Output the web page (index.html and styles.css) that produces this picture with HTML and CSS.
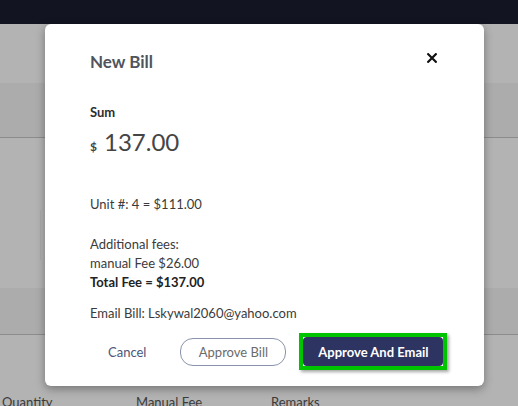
FILE: index.html
```html
<!DOCTYPE html>
<html>
<head>
<meta charset="utf-8">
<link rel="stylesheet" href="styles.css">
</head>
<body>
<div class="page">
  <div class="topbar"></div>
  <div class="band-light b1"></div>
  <div class="band-dark b2"></div>
  <div class="band-light b3"><span class="vline"></span></div>
  <div class="band-dark b4"></div>
  <div class="band-light b5">
    <div class="cols">
      <span>Quantity</span>
      <span>Manual Fee</span>
      <span>Remarks</span>
    </div>
  </div>
</div>

<div class="modal">
  <div class="modal-head">
    <h2 class="title">New Bill</h2>
    <button class="close" aria-label="Close">
      <svg width="10" height="10" viewBox="0 0 10 10"><path d="M1.2 1.2 L8.8 8.8 M8.8 1.2 L1.2 8.8" stroke="#111" stroke-width="2.2" stroke-linecap="square"/></svg>
    </button>
  </div>
  <div class="label">Sum</div>
  <div class="amount"><span class="cur">$</span><span class="num">137.00</span></div>
  <div class="unit">Unit #: 4 = $111.00</div>
  <div class="fees">
    <div>Additional fees:</div>
    <div>manual Fee $26.00</div>
    <div class="total">Total Fee = $137.00</div>
  </div>
  <div class="email">Email Bill: Lskywal2060@yahoo.com</div>
  <div class="actions">
    <button class="btn-cancel">Cancel</button>
    <button class="btn-outline">Approve Bill</button>
    <div class="highlight"><button class="btn-primary">Approve And Email</button></div>
  </div>
</div>
</body>
</html>
```

FILE: styles.css
```css
* { box-sizing: border-box; }
html, body { margin: 0; padding: 0; }
body {
  width: 518px;
  height: 406px;
  overflow: hidden;
  background: #b3b3b3;
  font-family: Lato, "Noto Sans", sans-serif;
  position: relative;
}
.page { display: flex; flex-direction: column; }
.topbar { height: 24px; background: #121521; }
.band-light { background: #b3b3b3; }
.band-dark { background: #acacac; border-bottom: 1px solid #8c8c8c; }
.b1 { height: 59px; }
.b2 { height: 55px; }
.b3 { height: 150px; position: relative; }
.vline { position: absolute; left: 40px; top: 72px; width: 1px; height: 50px; background: #aaaaaa; }
.b4 { height: 47px; }
.b5 { height: 80px; }
.cols {
  display: grid;
  grid-template-columns: 134px 135px 135px;
  padding: 59px 0 0 2px;
  font-size: 13px;
  color: #3a3a3a;
}

.modal {
  position: absolute;
  left: 45px;
  top: 24px;
  width: 439px;
  height: 362px;
  background: #fff;
  border-radius: 6px;
  box-shadow: 0 3px 10px rgba(0,0,0,0.35);
  padding: 28px 45px 0 45px;
  color: #3b3b3b;
  font-size: 13px;
}
.modal-head { display: flex; justify-content: space-between; align-items: center; height: 20px; }
.title {
  margin: 0;
  font-size: 17px;
  line-height: 20px;
  font-weight: 700;
  color: #50545d;
}
.close {
  border: 0; background: none; padding: 0; margin: 0 2px 0 0;
  width: 10px; height: 10px; display: flex;
  position: relative; top: -4px;
}
.label { margin-top: 32px; font-weight: 700; line-height: 16px; color: #2d2d2d; }
.amount { margin-top: 8px; display: flex; align-items: baseline; line-height: 28px; }
.cur { font-size: 12px; font-weight: 700; color: #444; margin-right: 7px; }
.num { font-size: 24px; color: #454545; }
.unit { margin-top: 35px; line-height: 16px; }
.fees { margin-top: 23px; line-height: 19px; }
.total { font-weight: 700; color: #222; }
.email { margin-top: 13px; line-height: 16px; }
.actions { margin-top: 12px; display: flex; align-items: center; margin-left: -2px; }
.actions > * { flex-shrink: 0; }
button { font-family: inherit; cursor: pointer; }
.btn-cancel {
  border: 0; background: none; height: 28px; padding: 0 34px 0 20px;
  font-size: 13px; color: #4c5578;
}
.btn-outline {
  width: 106px; height: 28px; border: 1.5px solid #8a92ae; border-radius: 13px;
  background: #fff; font-size: 13px; color: #6b6b6b; padding: 0;
}
.highlight {
  margin-left: 13px;
  border: 4px solid #00c400;
  box-shadow: 2px 2px 3px rgba(0,0,0,0.35);
  display: flex;
}
.btn-primary {
  width: 140px; height: 29px; border: 0; border-radius: 4px;
  background: #2d3461; color: #fff; font-size: 13px; font-weight: 700; padding: 0;
}
```
